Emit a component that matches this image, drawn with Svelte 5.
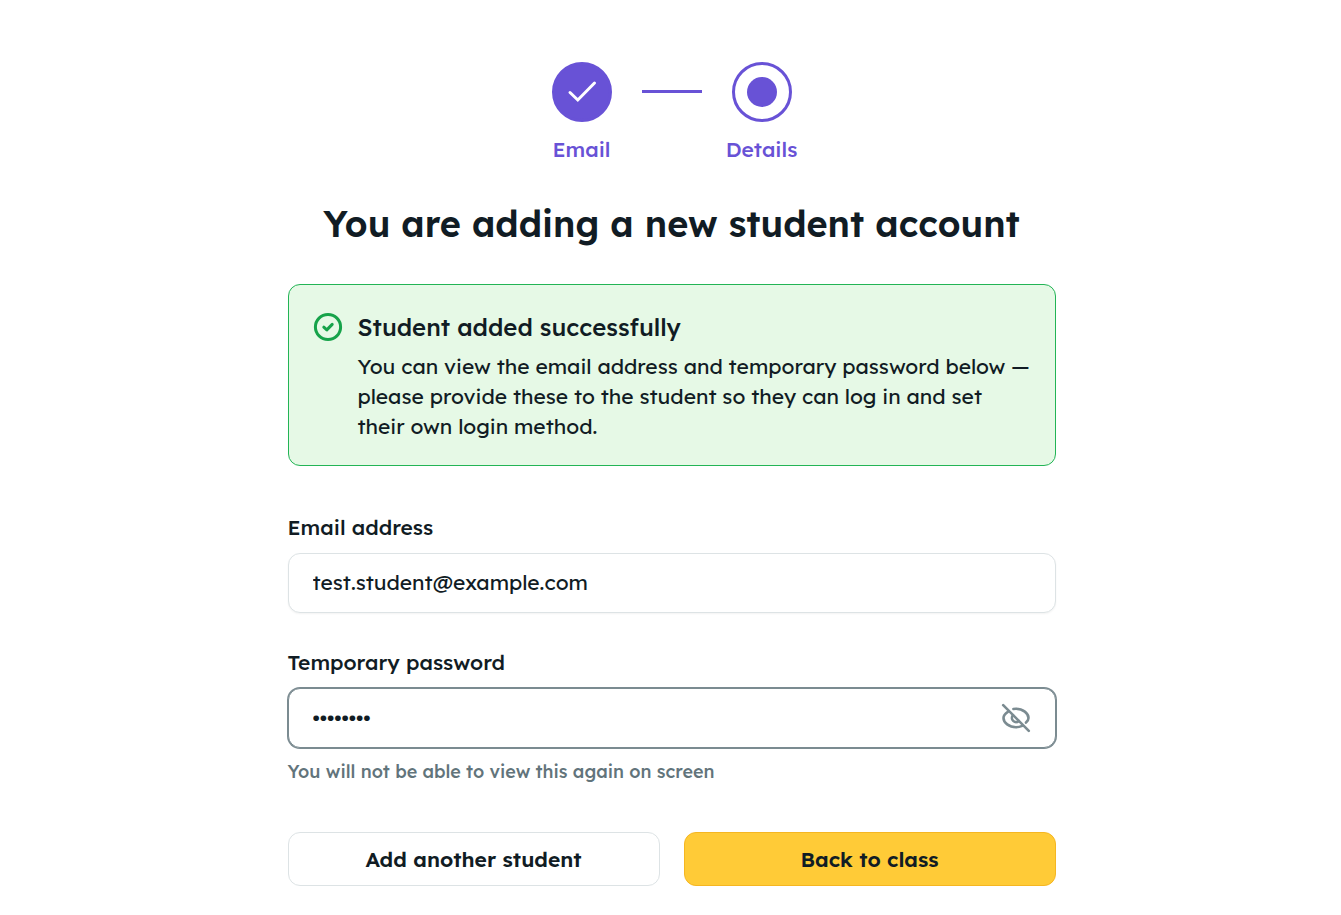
<script>
    let email = "test.student@example.com";
    let password = "password";
    let showPassword = false;

    const steps = [
        { label: "Email", done: true },
        { label: "Details", done: false },
    ];
</script>

<main>
    <ol class="steps">
        {#each steps as step, i}
            {#if i > 0}
                <li class="line" aria-hidden="true"></li>
            {/if}
            <li class="step">
                <span class="circle" class:done={step.done}>
                    {#if step.done}
                        <svg viewBox="0 0 30 30" width="30" height="30">
                            <path d="M3 15.5L10.8 23L27.5 6" fill="none" stroke="#fff" stroke-width="3" stroke-linecap="round" />
                        </svg>
                    {:else}
                        <span class="dot"></span>
                    {/if}
                </span>
                <span class="step-label">{step.label}</span>
            </li>
        {/each}
    </ol>

    <h1>You are adding a new student account</h1>

    <section class="alert" role="status">
        <svg class="alert-icon" viewBox="0 0 30 30" fill="none" stroke="#16a34a" stroke-width="3">
            <circle cx="15" cy="15" r="12.6" />
            <path d="M10.8 15.2L13.8 17.9L19.2 12.4" stroke-linecap="round" stroke-linejoin="round" />
        </svg>
        <div>
            <h2>Student added successfully</h2>
            <p>
                You can view the email address and temporary password below — please provide these to the student so
                they can log in and set their own login method.
            </p>
        </div>
    </section>

    <form on:submit|preventDefault>
        <div class="field">
            <label for="email">Email address</label>
            <input id="email" type="text" readonly bind:value={email} />
        </div>

        <div class="field">
            <label for="password">Temporary password</label>
            <div class="password">
                <input
                    id="password"
                    type={showPassword ? "text" : "password"}
                    readonly
                    value={password}
                    aria-describedby="password-help"
                />
                <button
                    type="button"
                    class="toggle"
                    aria-label="Toggle password visibility"
                    on:click={() => (showPassword = !showPassword)}
                >
                    <svg viewBox="0 0 30 30" fill="none" stroke="#7b8b91" stroke-width="2.6" stroke-linecap="round">
                        <path d="M6.8 8.8C4.2 10.5 2.5 12.8 2.5 15C2.5 19.8 8.2 24.2 15 24.2C17.3 24.2 19.4 23.7 21.2 22.9" />
                        <path d="M12.4 6C13.2 5.8 14.1 5.8 15 5.8C21.8 5.8 27.5 10.2 27.5 15C27.5 16.6 26.6 18.2 25 19.6" />
                        <path d="M12 12.2C10.5 13.8 10.6 16.4 12.2 17.9C13.8 19.4 16.2 19.4 17.8 18" />
                        <path d="M2.2 2.2L27.8 27.8" />
                    </svg>
                </button>
            </div>
            <p class="help" id="password-help">You will not be able to view this again on screen</p>
        </div>

        <div class="actions">
            <button type="button" class="secondary">Add another student</button>
            <button type="submit" class="primary">Back to class</button>
        </div>
    </form>
</main>

<style>
    :global(body) {
        background: #fff;
        color: #111c24;
        font-family: Lexend, Inter, "Open Sans", sans-serif;
        font-size: 21px;
        line-height: 30px;
    }

    main {
        box-sizing: border-box;
        padding: 62px 21px 29px 23px;
        display: flex;
        flex-direction: column;
        align-items: center;
    }

    .steps {
        display: flex;
        gap: 30px;
        margin: 0;
        padding: 0;
        list-style: none;
        color: #6852d6;
    }

    .step {
        width: 60px;
        display: flex;
        flex-direction: column;
        align-items: center;
        gap: 12px;
    }

    .circle {
        box-sizing: border-box;
        width: 60px;
        height: 60px;
        border: 3px solid #6852d6;
        border-radius: 50%;
        display: flex;
        align-items: center;
        justify-content: center;
    }

    .circle.done {
        background: #6852d6;
    }

    .dot {
        width: 30px;
        height: 30px;
        border-radius: 50%;
        background: #6852d6;
    }

    .step-label {
        font-weight: 500;
    }

    .line {
        width: 60px;
        height: 3px;
        margin-top: 28px;
        background: #6852d6;
    }

    h1 {
        margin: 36px 0;
        font-size: 36px;
        line-height: 48px;
        font-weight: 600;
        text-align: center;
    }

    .alert,
    form {
        box-sizing: border-box;
        width: 100%;
        max-width: 768px;
    }

    .alert {
        display: flex;
        gap: 15px;
        padding: 24px;
        border: 1px solid #22b455;
        border-radius: 12px;
        background: #e6f9e6;
    }

    .alert-icon {
        flex: none;
        width: 30px;
        height: 30px;
        margin-top: 3px;
    }

    h2 {
        margin: 0 0 6px;
        font-size: 24px;
        line-height: 36px;
        font-weight: 500;
    }

    p {
        margin: 0;
    }

    form {
        margin-top: 46px;
    }

    .field + .field {
        margin-top: 34px;
    }

    label {
        display: block;
        margin-bottom: 11px;
        font-weight: 500;
    }

    input {
        box-sizing: border-box;
        display: block;
        width: 100%;
        height: 60px;
        padding: 0 24px 2px;
        border: 1px solid #dde3e5;
        border-radius: 12px;
        background: #fff;
        color: inherit;
        font: inherit;
        box-shadow: 0 1px 2px rgba(0, 0, 0, 0.05);
        outline: none;
    }

    .password {
        position: relative;
    }

    .password input {
        padding-right: 72px;
        border-color: #7b8b91;
        box-shadow: 0 0 0 1px #7b8b91;
    }

    .toggle {
        position: absolute;
        top: 15px;
        right: 25px;
        width: 30px;
        height: 30px;
        padding: 0;
        border: none;
        background: none;
        cursor: pointer;
    }

    .toggle svg {
        display: block;
    }

    .help {
        margin-top: 12px;
        font-size: 18px;
        line-height: 24px;
        font-weight: 500;
        color: #62747b;
    }

    .actions {
        display: grid;
        grid-template-columns: 1fr 1fr;
        gap: 24px;
        margin-top: 48px;
    }

    .actions button {
        height: 54px;
        border: 1px solid #dde3e5;
        border-radius: 12px;
        background: #fff;
        color: inherit;
        font: inherit;
        font-weight: 600;
        cursor: pointer;
    }

    .actions .primary {
        border-color: #f5b622;
        background: #ffcb37;
    }
</style>
